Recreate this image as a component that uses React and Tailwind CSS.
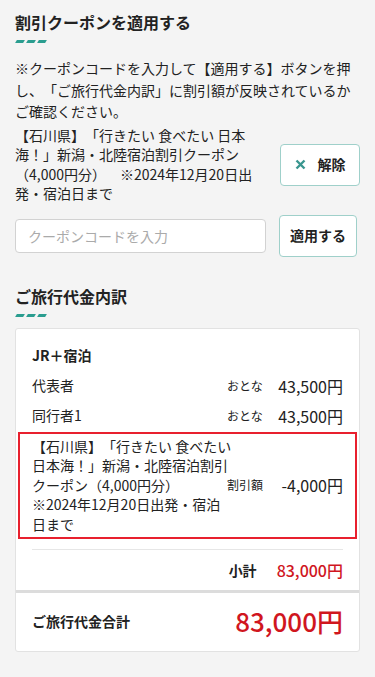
const font = {fontFamily: '"Noto Sans CJK JP", "Noto Sans", sans-serif'};

function Dashes() {
  return (
    <div className="mt-[6px] flex gap-[3px] pl-[1px]">
      <span className="block h-[3px] w-[8px] -skew-x-[30deg] bg-[#2a9d8f]" />
      <span className="block h-[3px] w-[8px] -skew-x-[30deg] bg-[#2a9d8f]" />
      <span className="block h-[3px] w-[8px] -skew-x-[30deg] bg-[#2a9d8f]" />
    </div>
  );
}

function Row({label, unit, price}) {
  return (
    <div className="flex h-[30px] items-center">
      <div className="flex-1 text-[14px]">{label}</div>
      <div className="w-[50px] text-[12px]">{unit}</div>
      <div className="w-[66px] text-right text-[16px]">{price}</div>
    </div>
  );
}

export default function App() {
  return (
    <div
      style={font}
      className="min-h-[677px] bg-[#f4f4f4] px-[15px] pt-[10px] pb-[24px] text-[#222] [text-spacing-trim:space-all]"
    >
      {/* coupon */}
      <h2 className="text-[16px] font-bold leading-[24px]">割引クーポンを適用する</h2>
      <Dashes />
      <p className="mt-[15px] text-[14px] leading-[21.5px]">
        ※クーポンコードを入力して【適用する】ボタンを押し、「ご旅行代金内訳」に割引額が反映されているかご確認ください。
      </p>

      <div className="mt-[3px] flex items-center">
        <div className="flex-1 whitespace-nowrap text-[14px] leading-[19.5px]">
          【石川県】「行きたい 食べたい 日本
          <br />
          海！」新潟・北陸宿泊割引クーポン
          <br />
          （4,000円分）　※2024年12月20日出
          <br />
          発・宿泊日まで
        </div>
        <button className="flex h-[42px] w-[80px] items-center justify-center gap-[12px] rounded-[4px] border border-[#9fd0ca] bg-white text-[14px] font-bold">
          <svg width="11" height="11" viewBox="0 0 11 11">
            <path d="M1.5 1.5L9.5 9.5M9.5 1.5L1.5 9.5" stroke="#3a968f" strokeWidth="2.4" />
          </svg>
          解除
        </button>
      </div>

      <div className="mt-[11px] flex items-center gap-[13px]">
        <input
          placeholder="クーポンコードを入力"
          className="h-[34px] flex-1 rounded-[4px] border border-[#d2d2d2] bg-white px-[12px] text-[14px] placeholder:text-[#aaa] outline-none"
        />
        <button className="mr-[3px] h-[42px] w-[78px] rounded-[4px] border border-[#9fd0ca] bg-white text-[14px] font-bold">
          適用する
        </button>
      </div>

      {/* price breakdown */}
      <h2 className="mt-[27px] text-[16px] font-bold leading-[24px]">ご旅行代金内訳</h2>
      <Dashes />

      <div className="mt-[11px] rounded-[3px] border border-[#e2e2e2] bg-white">
        <div className="px-[16px] pt-[12px]">
          <div className="flex h-[30px] items-center text-[14px] font-bold">JR＋宿泊</div>
          <Row label="代表者" unit="おとな" price="43,500円" />
          <Row label="同行者1" unit="おとな" price="43,500円" />
        </div>

        <div className="mx-[2px] mt-[1px] flex items-center border-2 border-[#e8202e] px-[12px] py-[3px]">
          <div className="min-w-0 flex-1 whitespace-nowrap text-[14px] leading-[19.5px]">
            【石川県】「行きたい 食べたい
            <br />
            日本海！」新潟・北陸宿泊割引
            <br />
            クーポン（4,000円分）
            <br />
            ※2024年12月20日出発・宿泊
            <br />
            日まで
          </div>
          <div className="w-[50px] text-[12px]">割引額</div>
          <div className="w-[66px] text-right text-[16px]">-4,000円</div>
        </div>

        <div className="mx-[16px] mt-[10px] border-t border-[#e6e6e6]" />
        <div className="flex h-[40px] items-center justify-end px-[16px]">
          <span className="text-[14px] font-bold">小計</span>
          <span className="ml-[20px] text-[16px] font-medium text-[#d0161e]">83,000円</span>
        </div>

        <div className="h-[3px] bg-[#dcdcdc]" />
        <div className="flex h-[58px] items-center justify-between px-[16px] pb-[2px]">
          <span className="text-[14px] font-bold">ご旅行代金合計</span>
          <span className="text-[26px] font-medium leading-none text-[#d0161e]">83,000円</span>
        </div>
      </div>
    </div>
  );
}
